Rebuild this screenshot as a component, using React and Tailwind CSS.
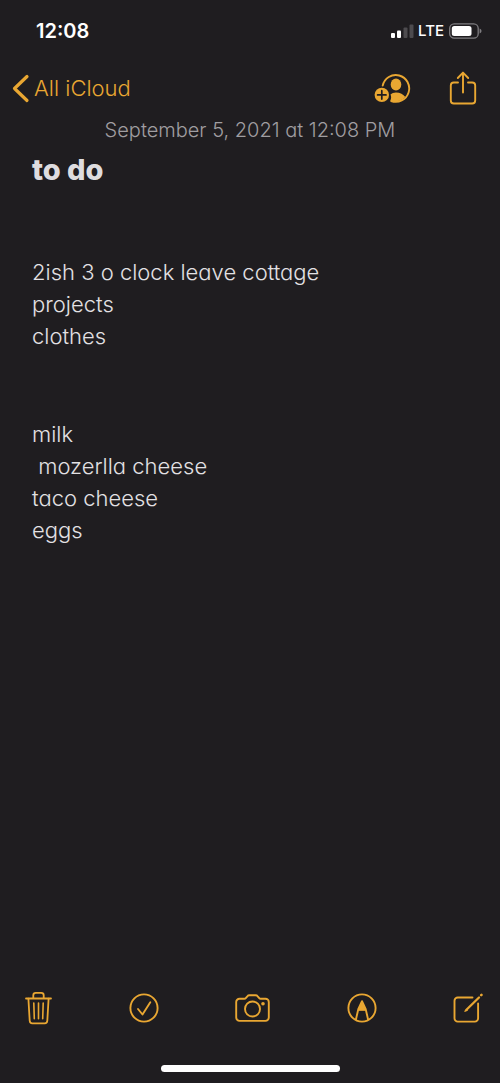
import { useState } from 'react';

const FIRST_LIST = ['2ish 3 o clock leave cottage', 'projects', 'clothes'];
const SECOND_LIST = ['milk', ' mozerlla cheese', 'taco cheese', 'eggs'];

const StatusBar = () => (
  <div className="flex h-[62px] items-center justify-between pl-9 pr-[18px] text-white">
    <span className="text-[20px] font-semibold leading-6">12:08</span>
    <div className="flex items-center">
      <svg width="23" height="15" viewBox="0 0 23 15" aria-label="Signal" role="img">
        <rect x="0" y="9" width="4" height="5" rx="1" fill="#fff" />
        <rect x="6" y="6.500" width="4" height="7.500" rx="1" fill="#fff" />
        <rect x="12.500" y="3.500" width="4" height="10.500" rx="1" fill="#4d4b4e" />
        <rect x="18.500" y="0.500" width="4" height="13.500" rx="1" fill="#4d4b4e" />
      </svg>
      <span className="ml-1 text-[15px] font-medium leading-6">LTE</span>
      <svg className="ml-1" width="34" height="16" viewBox="0 0 34 16" aria-label="Battery" role="img">
        <rect x="1.700" y="0.800" width="28.500" height="14.400" rx="4.500" fill="none" stroke="#7f7d80" strokeWidth="1.300" />
        <rect x="3.800" y="3" width="19.700" height="10" rx="2.500" fill="#fff" />
        <path d="M31.600 5.500v5c1.200-.5 1.900-1.400 1.900-2.500s-.7-2-1.900-2.500z" fill="#7f7d80" />
      </svg>
    </div>
  </div>
);

const NavBar = () => (
  <nav className="flex h-[52px] items-center justify-between pl-3 pr-[23px] text-[#e9a732]">
    <a href="#folders" className="flex items-center gap-1 text-[22px] font-[350] leading-7">
      <svg width="18" height="30" viewBox="0 0 18 30" fill="none" stroke="currentColor" strokeWidth="3.200" strokeLinecap="round" strokeLinejoin="round" aria-hidden="true">
        <path d="M15 3.500 2.500 15.500 15 27.500" />
      </svg>
      All iCloud
    </a>
    <div className="flex items-center gap-[37px]">
      <button type="button" aria-label="Add people">
        <svg className="block" width="38" height="32" viewBox="0 0 38 32" fill="none">
          <path d="M8.700 13.600A13.400 13.400 0 1 1 17.200 29" stroke="currentColor" strokeWidth="1.900" strokeLinecap="round" />
          <ellipse cx="22" cy="12.500" rx="5.300" ry="6" fill="currentColor" />
          <path d="M16.500 22.500c1.300-1.300 3.300-2 5.500-2 4 0 7.500 1.800 9.300 4.600-2.500 2.700-6 4.300-9.800 4.300-1.800 0-3.500-.3-5.100-1 .9-1.800 1-4 .1-5.900z" fill="currentColor" />
          <circle cx="7.800" cy="22.900" r="7.200" fill="currentColor" />
          <path d="M7.800 18.700v8.400M3.600 22.900H12" stroke="#1f1d20" strokeWidth="1.700" strokeLinecap="round" />
        </svg>
      </button>
      <button type="button" aria-label="Share">
        <svg className="block" width="28" height="34" viewBox="0 0 28 34" fill="none" stroke="currentColor" strokeWidth="1.900" strokeLinecap="round" strokeLinejoin="round">
          <path d="M9 11.500H4.800a3 3 0 0 0-3 3v15a3 3 0 0 0 3 3h18.400a3 3 0 0 0 3-3v-15a3 3 0 0 0-3-3H19" />
          <path d="M14 21.500V2M8.800 7 14 1.600 19.200 7" />
        </svg>
      </button>
    </div>
  </nav>
);

const Toolbar = ({ checked, onCheck }) => (
  <div className="flex h-[60px] items-center justify-between pl-[25px] pr-[17px] text-[#e9a732]">
    <button type="button" aria-label="Delete note">
      <svg className="block" width="27" height="34" viewBox="0 0 27 34" fill="none" stroke="currentColor" strokeWidth="1.800" strokeLinecap="round" strokeLinejoin="round">
        <path d="M1 7.500h25M8.300 7.300V4.200a2.400 2.400 0 0 1 2.400-2.400h5.600a2.400 2.400 0 0 1 2.400 2.400v3.100" />
        <path d="M3.400 7.700 4.700 29.800a2.600 2.600 0 0 0 2.600 2.500h12.400a2.600 2.600 0 0 0 2.600-2.500L23.600 7.700" />
        <path d="m8.800 12 .5 15.800M13.500 12v15.800M18.200 12l-.5 15.800" strokeWidth="1.600" />
      </svg>
    </button>
    <button type="button" aria-label="Checklist" aria-pressed={checked} onClick={onCheck}>
      <svg className="block" width="30" height="30" viewBox="0 0 30 30" fill="none" stroke="currentColor" strokeWidth="1.900" strokeLinecap="round" strokeLinejoin="round">
        <circle cx="15" cy="15" r="13.600" />
        <path d="m9 16 4.500 5.500 7.800-12.200" />
      </svg>
    </button>
    <button type="button" aria-label="Camera">
      <svg className="block" width="35" height="28" viewBox="0 0 35 28" fill="none" stroke="currentColor" strokeWidth="1.900" strokeLinejoin="round">
        <path d="M4.500 4.800h4.700c.8 0 1.300-.3 1.800-.9l1.300-1.600c.6-.8 1.200-1.100 2.200-1.100h6c1 0 1.600.3 2.200 1.100L24 3.900c.5.600 1 .9 1.800.9h4.700a3.300 3.300 0 0 1 3.300 3.300v15.500a3.300 3.300 0 0 1-3.300 3.300h-26a3.300 3.300 0 0 1-3.300-3.300V8.100a3.300 3.300 0 0 1 3.300-3.300z" />
        <circle cx="17.500" cy="15" r="7.500" />
        <circle cx="28" cy="9.700" r="1.800" fill="currentColor" stroke="none" />
      </svg>
    </button>
    <button type="button" aria-label="Markup">
      <svg className="block" width="30" height="30" viewBox="0 0 30 30" fill="none" stroke="currentColor" strokeWidth="1.900" strokeLinejoin="round">
        <circle cx="15" cy="15" r="13.600" />
        <path d="m8.800 27 2.600-11.200L15 8.200l3.600 7.600L21.200 27" />
        <path d="M11.300 17.300 15 8.200l3.700 9.100z" fill="currentColor" strokeWidth="1" />
      </svg>
    </button>
    <button type="button" aria-label="New note">
      <svg className="block" width="30" height="32" viewBox="0 0 30 32" fill="none" stroke="currentColor" strokeWidth="1.900" strokeLinecap="round" strokeLinejoin="round">
        <path d="M19.500 5.500H4.800a3.300 3.300 0 0 0-3.300 3.300v17.500a3.300 3.300 0 0 0 3.300 3.300h17a3.300 3.300 0 0 0 3.300-3.300V11.500" />
        <path d="M13.200 18 26 5.500" strokeWidth="2.300" />
        <path d="m12 19.200 2.200-1.100" strokeWidth="1.500" />
        <path d="m28.200 3.200.3-.3" strokeWidth="2.500" />
      </svg>
    </button>
  </div>
);

const NoteLines = ({ lines }) => (
  <div>
    {lines.map((line) => (
      <p key={line} className="whitespace-pre-wrap">{line}</p>
    ))}
  </div>
);

const App = () => {
  const [checked, setChecked] = useState(false);

  return (
    <div className="flex min-h-screen flex-col bg-[#1f1d20] font-['Inter','Liberation_Sans',sans-serif]">
      <StatusBar />
      <NavBar />
      {/* single-storey "a" in the note text */}
      <main className="grow [font-feature-settings:'cv11']">
        <p className="text-center text-[20px] font-light leading-8 text-[#a09ea1]">September 5, 2021 at 12:08 PM</p>
        <article className="mt-1 px-8 text-[22px] font-[350] leading-8 text-[#e3e1e4]">
          <h1 className="mb-[66px] text-[29px] font-extrabold leading-10 text-[#dedcdf]">to do</h1>
          <div className="flex flex-col gap-[66px]">
            <NoteLines lines={FIRST_LIST} />
            <NoteLines lines={SECOND_LIST} />
          </div>
        </article>
      </main>
      <Toolbar checked={checked} onCheck={() => setChecked(!checked)} />
      <div className="flex justify-center pb-[11px] pt-[27px]">
        <div className="h-[7px] w-[179px] rounded-full bg-white" />
      </div>
    </div>
  );
};

export default App;
